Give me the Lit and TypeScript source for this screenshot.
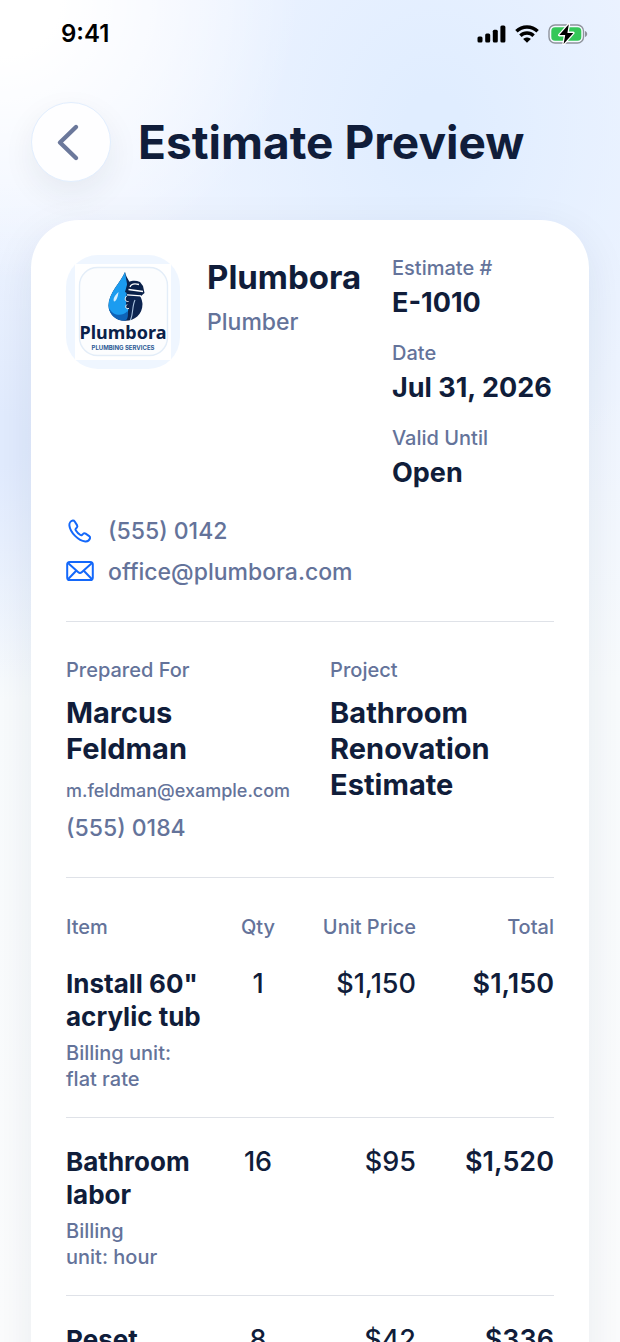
import { LitElement, html, css, svg, nothing } from 'lit';
import { customElement, property } from 'lit/decorators.js';

interface LineItem {
  name: string;
  note?: [string, string];
  qty: number;
  unitPrice: number;
  total: number;
}

const ITEMS: LineItem[] = [
  { name: 'Install 60" acrylic tub', note: ['Billing unit:', 'flat rate'], qty: 1, unitPrice: 1150, total: 1150 },
  { name: 'Bathroom labor', note: ['Billing', 'unit: hour'], qty: 16, unitPrice: 95, total: 1520 },
  { name: 'Reset', qty: 8, unitPrice: 42, total: 336 },
];

const money = (value: number) => `$${value.toLocaleString('en-US')}`;

@customElement('status-bar')
export class StatusBar extends LitElement {
  @property() time = '9:41';

  static styles = css`
    :host {
      display: flex;
      align-items: center;
      justify-content: space-between;
      height: 68px;
      padding: 0 32px 0 61px;
      color: #000;
    }
    .time {
      font-size: 24px;
      line-height: 30px;
      font-weight: 600;
    }
    .icons {
      display: flex;
      align-items: center;
      gap: 9px;
    }
    svg {
      display: block;
    }
  `;

  render() {
    return html`
      <span class="time">${this.time}</span>
      <div class="icons">
        <svg width="29" height="18" viewBox="0 0 29 18" aria-label="Signal">
          <rect x="0.5" y="11.5" width="5" height="6" rx="1.5" />
          <rect x="8.2" y="8.5" width="5" height="9" rx="1.5" />
          <rect x="15.8" y="4.8" width="5" height="12.7" rx="1.5" />
          <rect x="23.4" y="0.5" width="5" height="17" rx="1.5" />
        </svg>
        <svg width="24" height="18" viewBox="0 0 24 18" fill="none" stroke="#000" stroke-width="3.4" aria-label="Wi-Fi">
          <path d="M1.4 6.3C7.2 0.6 16.8 0.6 22.6 6.3" />
          <path d="M5.4 10.7C9 7.1 15 7.1 18.6 10.7" />
          <path d="M12 17.8L8.2 14C10.4 12 13.6 12 15.8 14Z" fill="#000" stroke="none" />
        </svg>
        <svg width="40" height="22" viewBox="0 0 40 22" aria-label="Battery charging">
          <rect x="1" y="2" width="34.5" height="18" rx="6" fill="#fff" fill-opacity=".6" stroke="#8e939c" stroke-width="1.4" />
          <rect x="3.3" y="4.3" width="30" height="13.4" rx="3.8" fill="#34c759" />
          <path d="M37 8v6c1.4-.5 2.2-1.6 2.2-3S38.4 8.5 37 8z" fill="#8e939c" />
          <path
            d="M20.8 1.3L11.3 12.1h5.9L15.6 20.9L25.3 9.9h-5.9z"
            stroke="#fff"
            stroke-width="2.6"
            stroke-linejoin="round"
            paint-order="stroke"
          />
        </svg>
      </div>
    `;
  }
}

@customElement('company-logo')
export class CompanyLogo extends LitElement {
  static styles = css`
    :host {
      display: block;
      box-sizing: border-box;
      width: 114px;
      height: 114px;
      padding: 9px;
      border-radius: 32px;
      background: #eff6ff;
    }
    svg {
      display: block;
      background: #fff;
    }
    .word {
      font: 700 18px 'Noto Sans', sans-serif;
      fill: #0a2149;
    }
    .tag {
      font: 700 6px Inter, sans-serif;
      fill: #2c5a94;
    }
  `;

  render() {
    return html`
      <svg width="96" height="96" viewBox="0 0 96 96" role="img" aria-label="Plumbora Plumbing Services">
        <rect x="4.5" y="3.5" width="88" height="88" rx="18" fill="#fcfdfe" stroke="#e3edf8" stroke-width="1.4" />
        ${svg`
          <path d="M50 8C46 18 33.5 29 33.5 41.500A17 15.5 0 0 0 50 56.8C59 57 67.5 51 67.5 40C67.5 29 53 21 50 8Z" fill="#0c2450" />
          <path d="M50 8C46 18 33.5 29 33.5 41.5C33.5 48 38 52 44 53C50 53.5 54 50 53 45L51 40L52 20Z" fill="#1b9cf0" />
          <path d="M34 44C35 52 42 57 50 56.8C53 56 53.5 50 52.5 47C47 53 38 52 34 44Z" fill="#0f63b8" />
          <path d="M43.500 28C40 31 37.5 35 39 37.5C41.500 37.500 43 32 43.500 28Z" fill="#d6efff" />
          <path d="M52 21C53 16.5 60 15.5 65 18L68 22L69.500 29L66 32L54 30L50 28Z" fill="#0a2149" />
          <path d="M55 23C56 20 60 19.500 64 20.500M53.5 25.500L68 27.500M52 30.800L66 31.800" stroke="#fff" stroke-width="1.300" fill="none" />
          <path d="M51.5 32C49 35 50.5 38 53.5 37.5M52 40.5C49.5 42.5 51 45.5 54 44.5" stroke="#fff" stroke-width="1" fill="#0a2149" />
          <path d="M60 36C57 42 58.5 49 55.5 56" stroke="#a9c2df" stroke-width="1.100" fill="none" />
        `}
        <text class="word" x="48" y="75" text-anchor="middle">Plumbora</text>
        <text class="tag" x="48" y="86" text-anchor="middle">PLUMBING SERVICES</text>
      </svg>
    `;
  }
}

@customElement('line-items')
export class LineItems extends LitElement {
  @property({ attribute: false }) items: LineItem[] = [];

  static styles = css`
    table {
      width: 100%;
      table-layout: fixed;
      border-collapse: collapse;
    }
    .col-qty {
      width: 92px;
    }
    .col-price {
      width: 112px;
    }
    .col-total {
      width: 138px;
    }
    th,
    td {
      padding: 0;
      vertical-align: top;
      text-align: right;
      font-size: 27px;
      line-height: 33px;
      font-weight: 500;
    }
    thead th {
      font-size: 20px;
      line-height: 26px;
      font-weight: 500;
      color: #64739a;
    }
    th:first-child {
      text-align: left;
    }
    th:nth-child(2),
    td:nth-child(2) {
      text-align: center;
    }
    tbody th,
    tbody td {
      padding: 27px 0 25px;
      border-bottom: 1px solid #dfe2e8;
    }
    tbody .name {
      font-size: 26px;
      font-weight: 700;
    }
    td:last-child {
      font-weight: 600;
    }
    .note {
      display: block;
      margin-top: 7px;
      font-size: 20px;
      line-height: 26px;
      font-weight: 500;
      color: #64739a;
    }
  `;

  render() {
    return html`
      <table>
        <colgroup>
          <col />
          <col class="col-qty" />
          <col class="col-price" />
          <col class="col-total" />
        </colgroup>
        <thead>
          <tr>
            <th scope="col">Item</th>
            <th scope="col">Qty</th>
            <th scope="col">Unit Price</th>
            <th scope="col">Total</th>
          </tr>
        </thead>
        <tbody>
          ${this.items.map(
            (item) => html`
              <tr>
                <th class="name" scope="row">
                  ${item.name}
                  ${item.note ? html`<span class="note">${item.note[0]}<br />${item.note[1]}</span>` : nothing}
                </th>
                <td>${item.qty}</td>
                <td>${money(item.unitPrice)}</td>
                <td>${money(item.total)}</td>
              </tr>
            `
          )}
        </tbody>
      </table>
    `;
  }
}

@customElement('app-root')
export class AppRoot extends LitElement {
  static styles = css`
    :host {
      display: block;
      height: 100vh;
      overflow-y: auto;
      scrollbar-width: none;
      font-family: Inter, 'Liberation Sans', sans-serif;
      color: #101d3a;
      background:
        radial-gradient(ellipse 300px 280px at 0 0, #ffffff 20%, #ffffff00),
        radial-gradient(ellipse 300px 360px at 70% 130px, #e0edff 10%, #e0edff00),
        radial-gradient(ellipse 240px 260px at 0 440px, #e1ebfe 10%, #e1ebfe00),
        linear-gradient(#eff4ff 0, #eff5ff 400px, #f8fbfd 680px, #fbfcfd);
    }
    h1,
    h2,
    p,
    dl,
    dd {
      margin: 0;
    }
    .header {
      display: flex;
      align-items: center;
      gap: 27px;
      padding: 34px 31px 38px;
    }
    .back {
      display: grid;
      place-items: center;
      width: 80px;
      height: 80px;
      padding: 0;
      border: 1px solid #e2eefe;
      border-radius: 50%;
      background: #fefeff;
      box-shadow: 0 12px 32px #1f243a12;
    }
    .title {
      font-size: 46px;
      line-height: 56px;
      font-weight: 700;
    }
    .card {
      margin: 0 31px;
      padding: 35px;
      border-radius: 48px;
      background: #fff;
      box-shadow: 0 12px 44px #1f243a14;
    }
    .summary {
      display: grid;
      grid-template-columns: auto 1fr 162px;
      column-gap: 27px;
    }
    .company {
      font-size: 33px;
      line-height: 44px;
      font-weight: 700;
    }
    .trade,
    .contact,
    .phone {
      font-size: 23px;
      line-height: 30px;
      font-weight: 500;
      color: #64739a;
    }
    .trade {
      margin-top: 8px;
    }
    .meta {
      display: grid;
      row-gap: 20px;
    }
    .label {
      font-size: 20px;
      line-height: 26px;
      font-weight: 500;
      color: #64739a;
    }
    .value {
      margin-top: 5px;
      font-size: 27px;
      line-height: 34px;
      font-weight: 700;
      white-space: nowrap;
    }
    .contacts {
      display: grid;
      gap: 11px;
      padding: 26px 0 34px;
    }
    .contact {
      display: flex;
      align-items: center;
      gap: 14px;
      text-decoration: none;
    }
    .parties {
      display: grid;
      grid-template-columns: 1fr 1fr;
      gap: 40px;
      padding: 35px 0 34px;
      border: solid #dfe2e8;
      border-width: 1px 0;
      margin-bottom: 36px;
    }
    .name {
      margin-top: 12px;
      font-size: 29px;
      line-height: 36px;
      font-weight: 700;
    }
    .email {
      margin: 12px 0 10px;
      font-size: 18px;
      line-height: 24px;
      font-weight: 500;
      color: #64739a;
    }
  `;

  private renderMeta(label: string, value: string) {
    return html`
      <div>
        <dt class="label">${label}</dt>
        <dd class="value">${value}</dd>
      </div>
    `;
  }

  render() {
    return html`
      <status-bar></status-bar>
      <header class="header">
        <button class="back" aria-label="Back">
          <svg width="30" height="40" viewBox="0 0 30 40" fill="none" stroke="#6b789b" stroke-width="4.4" stroke-linecap="round" stroke-linejoin="round">
            <path d="M20 5L4 20.5L20 36" />
          </svg>
        </button>
        <h1 class="title">Estimate Preview</h1>
      </header>
      <main class="card">
        <section class="summary">
          <company-logo></company-logo>
          <div>
            <h2 class="company">Plumbora</h2>
            <p class="trade">Plumber</p>
          </div>
          <dl class="meta">
            ${this.renderMeta('Estimate #', 'E-1010')}
            ${this.renderMeta('Date', 'Jul 31, 2026')}
            ${this.renderMeta('Valid Until', 'Open')}
          </dl>
        </section>
        <section class="contacts">
          <a class="contact" href="tel:5550142">
            <svg width="28" height="28" viewBox="0 0 28 28" fill="none" stroke="#1468fa" stroke-width="2" stroke-linejoin="round">
              <path d="M6.8 3.6C4.8 4 3 6 3.4 8.6C4.2 15.5 12.5 23.8 19.2 24.4C21.6 24.6 23.4 23.2 24 21.4C24.3 20.5 24 19.7 23.2 19.1L19.6 16.6C18.7 16 17.8 16.1 17.1 16.9L16 18C15.5 18.4 15 18.4 14.4 18C12.6 16.9 10.8 15.1 9.7 13.3C9.3 12.7 9.4 12.2 9.8 11.7L10.8 10.6C11.5 9.8 11.6 9 11 8.1L8.7 4.5C8.2 3.8 7.6 3.5 6.8 3.6Z" />
            </svg>
            (555) 0142
          </a>
          <a class="contact" href="mailto:office@plumbora.com">
            <svg width="28" height="28" viewBox="0 0 28 28" fill="none" stroke="#1468fa" stroke-width="2" stroke-linejoin="round">
              <rect x="1.2" y="4" width="25.6" height="18" rx="2.6" />
              <path d="M2 5L12.3 14.2C13.4 15.2 14.6 15.2 15.7 14.2L26 5M2 21.2L10.2 12.8M26 21.2L17.8 12.8" />
            </svg>
            office@plumbora.com
          </a>
        </section>
        <section class="parties">
          <div>
            <p class="label">Prepared For</p>
            <h2 class="name">Marcus Feldman</h2>
            <p class="email">m.feldman@example.com</p>
            <p class="phone">(555) 0184</p>
          </div>
          <div>
            <p class="label">Project</p>
            <h2 class="name">Bathroom Renovation Estimate</h2>
          </div>
        </section>
        <line-items .items=${ITEMS}></line-items>
      </main>
    `;
  }
}

declare global {
  interface HTMLElementTagNameMap {
    'app-root': AppRoot;
    'status-bar': StatusBar;
    'company-logo': CompanyLogo;
    'line-items': LineItems;
  }
}
